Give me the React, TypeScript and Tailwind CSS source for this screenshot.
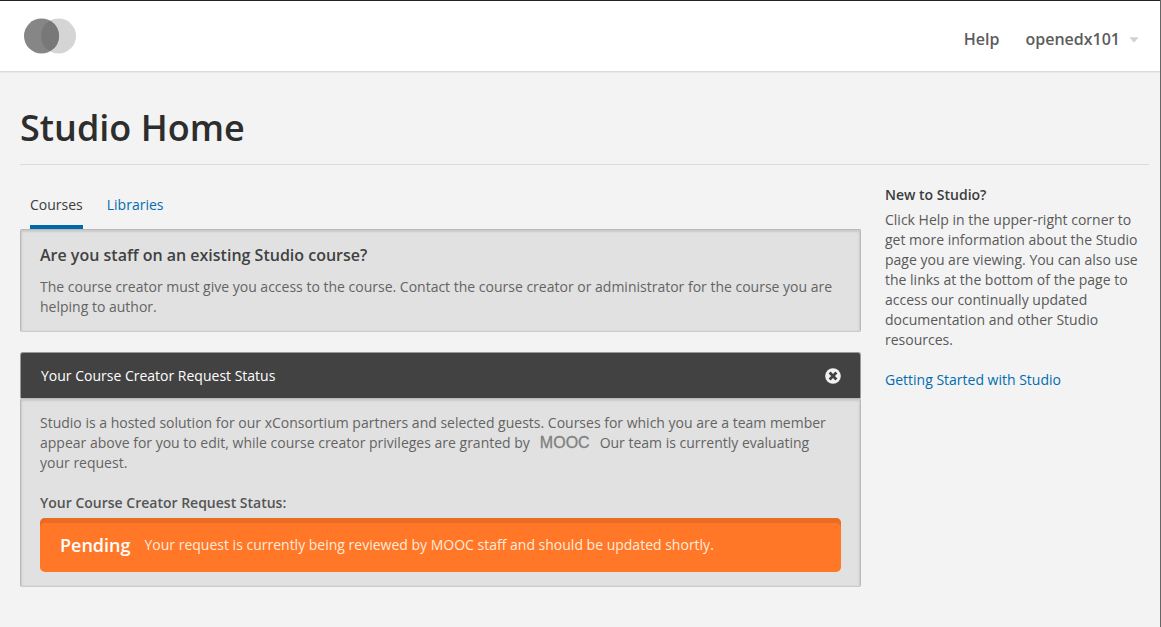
const panelShadow =
  "border border-[#b9b9b9] border-b-[#cbcbcb] rounded-xs bg-[#e1e1e1] shadow-[inset_0_1px_2px_1px_rgba(0,0,0,0.1)]";

function Logo() {
  return (
    <svg width="54" height="36" viewBox="0 0 54 36" role="img" aria-label="Studio logo">
      <circle cx="35.5" cy="18" r="17.5" fill="#d5d5d5" />
      <circle cx="18.5" cy="18" r="17.5" fill="#868686" />
      <path d="M27 2.7a17.5 17.5 0 0 1 0 30.6a17.5 17.5 0 0 1 0 -30.6z" fill="#787878" />
    </svg>
  );
}

function Header() {
  return (
    <header className="flex h-[72px] items-start justify-between border-t border-b border-t-[#222] border-b-[#dcdcdc] bg-white pr-[21px] pl-[23px] shadow-[0_1px_1px_rgba(0,0,0,0.04)]">
      <a href="#home" className="pt-[17px]">
        <Logo />
      </a>
      <nav className="flex gap-[26px] pt-[26px] text-base leading-6 font-semibold text-[#5c5c5c]">
        <a href="#help">Help</a>
        <button type="button" className="flex items-center gap-[9px]">
          openedx101
          <svg width="10" height="6" viewBox="0 0 10 6" className="mt-[2px]" aria-hidden="true">
            <path d="M0.3 0.3h9.4L5.6 5Q5 5.6 4.4 5z" fill="#d2d2d2" />
          </svg>
        </button>
      </nav>
    </header>
  );
}

function StaffNotice() {
  return (
    <section className={`${panelShadow} px-[19px] pt-[13px] pb-[14px]`}>
      <h2 className="text-base leading-6 font-semibold text-[#414141]">Are you staff on an existing Studio course?</h2>
      <p className="mt-[10px]">
        The course creator must give you access to the course. Contact the course creator or administrator for the
        course you are helping to author.
      </p>
    </section>
  );
}

function RequestStatus() {
  return (
    <section className="mt-5">
      <div className="flex h-[46px] items-center justify-between rounded-t-[3px] border border-b-0 border-[#999] bg-[#424242] pr-[19px] pl-5 text-white">
        <h2>Your Course Creator Request Status</h2>
        <button type="button" aria-label="Close">
          <svg width="16" height="16" viewBox="0 0 16 16" aria-hidden="true">
            <circle cx="8" cy="8" r="7.8" fill="#f2f2f2" />
            <path d="M4.6 4.6l6.8 6.8M11.4 4.6l-6.8 6.8" stroke="#424242" strokeWidth="2.8" />
          </svg>
        </button>
      </div>
      <div className={`${panelShadow} px-[19px] pt-[14px] pb-[14px]`}>
        <p>
          Studio is a hosted solution for our xConsortium partners and selected guests. Courses for which you are a team
          member appear above for you to edit, while course creator privileges are granted by
          <span className="mx-[10px] font-['Liberation_Sans',sans-serif] text-base leading-4 text-[#808080] [-webkit-text-stroke:0.3px_#808080]">
            MOOC
          </span>
          Our team is currently evaluating your request.
        </p>
        <h3 className="mt-5 font-semibold text-[#555]">Your Course Creator Request Status:</h3>
        <div className="mt-[5px] flex h-[54px] items-center gap-[14px] rounded-[5px] bg-[#ff7727] px-5 text-white shadow-[inset_0_5px_0_#e86c24]">
          <strong className="text-lg leading-6 font-semibold">Pending</strong>
          <span className="text-[#ffebdc]">
            Your request is currently being reviewed by MOOC staff and should be updated shortly.
          </span>
        </div>
      </div>
    </section>
  );
}

export default function App() {
  return (
    <div className="min-h-screen border-r border-[#666] bg-[#f3f3f3] font-['Open_Sans','Noto_Sans',sans-serif] text-sm leading-5 text-[#646464]">
      <Header />
      <div className="pr-[11px] pl-5">
        <h1 className="border-b border-[#dcdcdc] pt-[32px] pb-[12px] text-4xl leading-[48px] font-semibold text-[#2d2d2d]">
          Studio Home
        </h1>
        <div className="flex gap-6">
          <main className="min-w-0 flex-1 pt-[30px]">
            <nav className="flex gap-6 pl-[10px]">
              <a href="#courses" aria-current="page" className="border-b-4 border-[#0069ab] pb-[10px] text-[#3c3c3c]">
                Courses
              </a>
              <a href="#libraries" className="text-[#006daf]">
                Libraries
              </a>
            </nav>
            <StaffNotice />
            <RequestStatus />
          </main>
          <aside className="w-[264px] shrink-0 pt-5 text-[#595959]">
            <h2 className="font-semibold text-[#3c3c3c]">New to Studio?</h2>
            <p className="mt-[5px]">
              Click Help in the upper-right corner to get more information about the Studio page you are viewing. You
              can also use the links at the bottom of the page to access our continually updated documentation and other
              Studio resources.
            </p>
            <a href="#getting-started" className="mt-5 block text-[#006daf]">
              Getting Started with Studio
            </a>
          </aside>
        </div>
      </div>
    </div>
  );
}
